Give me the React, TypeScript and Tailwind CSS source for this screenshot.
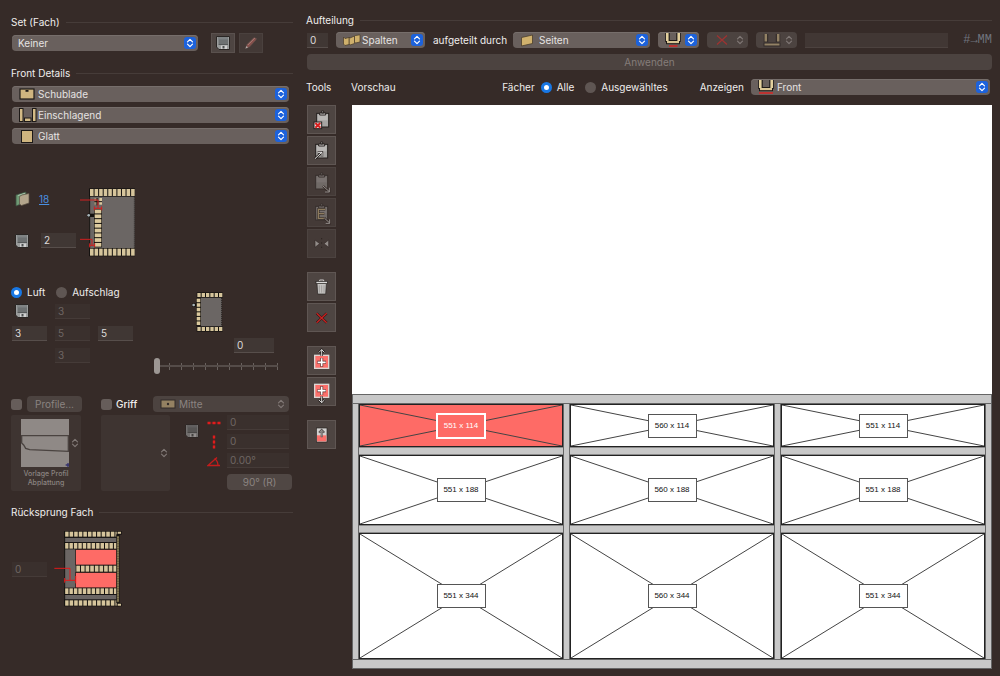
import React from 'react';
import clsx from 'clsx';

/* ---------- Icons ---------- */

const FloppyIcon: React.FC<{ className?: string }> = ({ className }) => (
  <svg viewBox="0 0 14 14" className={clsx('h-[14px] w-[14px] shrink-0', className)}>
    <path d="M0.5 0.5H13.5V13.5H3L0.5 11Z" fill="#9b9d9d" stroke="#2a2624" />
    <path d="M2.500 1H12V8H2.500Z" fill="#6d7172" />
    <path d="M2.500 1H12V3.500H2.500Z" fill="#7f8384" />
    <path d="M2.500 8.500H12" stroke="#555859" />
    <path d="M5 9.500H11V13H5Z" fill="#cfd0d0" />
    <path d="M6.500 10H8.500V12.500H6.500Z" fill="#4b4e4f" />
  </svg>
);

const PencilIcon: React.FC = () => (
  <svg viewBox="0 0 14 14" className="h-[14px] w-[14px]">
    <path d="M1.500 12.500L3 8.500L10 1.500L12.500 2.500L12 4L5.500 11Z" fill="#85504b" stroke="#5a4e4a" strokeWidth="0.6" />
    <path d="M3.800 9L10.800 2" stroke="#ab7d77" strokeWidth="1" />
    <path d="M1.500 12.500L2.500 10L4 11.500Z" fill="#b9b2ae" />
  </svg>
);

const DrawerIcon: React.FC = () => (
  <svg viewBox="0 0 16 12" className="h-3 w-4">
    <rect x="1" y="1" width="14" height="10" fill="#cfb57f" stroke="#1d1917" strokeWidth="1.2" />
    <rect x="6.500" y="2" width="3" height="1.800" fill="#1d1917" />
  </svg>
);

const InsetIcon: React.FC = () => (
  <svg viewBox="0 0 18 14" className="h-[14px] w-[18px]">
    <g fill="#d3bb87" stroke="#1d1917">
      <rect x="0.500" y="0.500" width="3.500" height="13" />
      <rect x="13.500" y="0.500" width="3.500" height="13" />
      <rect x="5.500" y="10" width="6.500" height="3.500" />
    </g>
  </svg>
);

const PlainIcon: React.FC = () => (
  <svg viewBox="0 0 12 13" className="h-[13px] w-3">
    <rect x="0.500" y="0.500" width="11" height="12" fill="#cfb57f" stroke="#1d1917" />
  </svg>
);

const ColumnsIcon: React.FC = () => (
  <svg viewBox="0 0 18 12" className="h-3 w-[18px]">
    <g fill="#cfb06c" stroke="#463a2a" strokeWidth="0.700">
      <path d="M11.500 2.500L12.500 1.500L17 0.800V8L12.500 9L11.500 8Z" />
      <path d="M6 3L7 4L11.500 2V9.500L7 11L6 10Z" />
      <path d="M0.500 3L2 4.500L6 3.500V10.500L2 11.500L0.500 10Z" />
    </g>
  </svg>
);

const BoardIcon: React.FC = () => (
  <svg viewBox="0 0 14 13" className="h-[13px] w-[14px]">
    <path d="M1.500 3.500L12.500 1V9.500L1.500 12Z" fill="#d0b16d" stroke="#4a3d2c" strokeWidth="0.800" />
  </svg>
);

// Cabinet seen from above, the red line marks the front
const FrontIcon: React.FC<{ narrow?: boolean }> = ({ narrow }) => (
  <svg viewBox="0 0 16 14" className="h-[14px] w-4">
    <path d="M2.500 0V9M13.500 0V9" stroke="#1d1917" strokeWidth="4.500" />
    <rect x="1.500" y="7.500" width="13" height="3.200" fill="#d9c594" stroke="#1d1917" />
    <path d="M2.300 0V8M13.700 0V8" stroke="#e3d09d" strokeWidth="2.600" />
    <path d={narrow ? 'M4 13H12.500' : 'M1 13H15'} stroke="#d22a28" strokeWidth="1.600" />
  </svg>
);

const SocketIcon: React.FC = () => (
  <svg viewBox="0 0 18 13" className="h-[13px] w-[18px]">
    <path d="M3 0V8M15 0V8" stroke="#1d1917" strokeWidth="4.500" />
    <path d="M2.800 0V7.500M15.200 0V7.500" stroke="#cdb684" strokeWidth="2.500" />
    <rect x="1" y="9" width="16" height="3" fill="#cdb684" stroke="#1d1917" />
  </svg>
);

const CrossIcon: React.FC = () => (
  <svg viewBox="0 0 12 12" className="h-3 w-3">
    <path d="M1 1.500L11 10.500M11 1.500L1 10.500" stroke="#e02626" strokeWidth="1.300" />
  </svg>
);

const HandleIcon: React.FC = () => (
  <svg viewBox="0 0 16 10" className="h-[10px] w-4">
    <rect x="1" y="1" width="14" height="8" fill="#cfb57f" stroke="#1d1917" />
    <circle cx="8" cy="5" r="1.200" fill="#1d1917" />
  </svg>
);

const ThicknessIcon: React.FC = () => (
  <svg viewBox="0 0 15 16" className="h-4 w-[15px]">
    <path d="M1 4L11 1V11L1 15Z" fill="#6f9a75" stroke="#3c5040" strokeWidth="0.800" />
    <path d="M3 4.500L10 2.200" stroke="#b9cdb9" strokeWidth="0.800" />
    <path d="M4.500 5.500L7 4L14 2.500V12L6.500 14.500L4.500 13Z" fill="#b3a58c" stroke="#5b5145" strokeWidth="0.700" />
  </svg>
);

const Arrows: React.FC<{ muted?: boolean }> = ({ muted }) => (
  <svg viewBox="0 0 12 12" className="h-3 w-3">
    {!muted && <rect width="12" height="12" rx="3" fill="#1c62dc" />}
    <path
      d="M3.500 4.800L6 2.300L8.500 4.800M3.500 7.200L6 9.700L8.500 7.200"
      fill="none"
      stroke={muted ? '#807875' : '#ffffff'}
      strokeWidth="1.200"
      strokeLinecap="round"
      strokeLinejoin="round"
    />
  </svg>
);

/* ---------- Controls ---------- */

interface PopupProps {
  label: string;
  value?: string;
  icon?: React.ReactNode;
  disabled?: boolean;
  className?: string;
  indent?: string;
}

const Popup: React.FC<PopupProps> = ({ label, value = '', icon, disabled, className, indent = 'pl-[26px]' }) => (
  <div
    className={clsx(
      'relative h-4 rounded',
      disabled ? 'bg-[#4c4340]' : 'bg-[#69605d] shadow-[inset_0_1px_0_#766e6b]',
      className,
    )}
  >
    <select
      aria-label={label}
      disabled={disabled}
      className={clsx(
        'block h-4 w-full appearance-none bg-transparent pr-4 leading-4 opacity-100 outline-none',
        disabled ? 'text-[#8b8481]' : 'text-[#e6e3e2]',
        indent,
      )}
    >
      <option>{value}</option>
    </select>
    {icon && (
      <span className={clsx('pointer-events-none absolute inset-y-0 left-[7px] flex items-center', disabled && 'opacity-55')}>
        {icon}
      </span>
    )}
    <span className="pointer-events-none absolute inset-y-0 right-[2px] flex items-center">
      <Arrows muted={disabled} />
    </span>
  </div>
);

const Field: React.FC<{ label: string; value: string; disabled?: boolean; className?: string }> = ({
  label,
  value,
  disabled,
  className,
}) => (
  <input
    aria-label={label}
    defaultValue={value}
    disabled={disabled}
    className={clsx(
      'block h-[15px] border-b px-[3px] leading-[14px] outline-none',
      disabled ? 'border-[#453b38] bg-[#3a302d] text-[#6f6663]' : 'border-[#574e4b] bg-[#403734] text-[#dedad9]',
      className,
    )}
  />
);

const Radio: React.FC<{ name: string; label: string; checked?: boolean }> = ({ name, label, checked }) => (
  <label className="flex items-center gap-[5px]">
    <input
      type="radio"
      name={name}
      defaultChecked={checked}
      className="h-[11px] w-[11px] appearance-none rounded-full bg-[#5f5653] checked:border-[3px] checked:border-[#1877e4] checked:bg-white"
    />
    {label}
  </label>
);

const Check: React.FC<{ label: string }> = ({ label }) => (
  <input type="checkbox" aria-label={label} className="h-[11px] w-[11px] appearance-none rounded-[3px] bg-[#665d5a]" />
);

const Heading: React.FC<{ children: React.ReactNode }> = ({ children }) => (
  <h2 className="flex h-4 items-center gap-[6px] whitespace-nowrap leading-4">
    {children}
    <span className="h-px flex-1 bg-[#463c39]" />
  </h2>
);

/* ---------- Technical drawings ---------- */

interface PlankProps {
  x: number;
  y: number;
  w: number;
  h: number;
  n: number;
  vertical?: boolean;
}

// Cut board: a dark strip with light wood segments
const Plank: React.FC<PlankProps> = ({ x, y, w, h, n, vertical }) => {
  const step = (vertical ? h : w) / n;
  return (
    <g>
      <rect x={x} y={y} width={w} height={h} fill="#14110f" />
      {Array.from({ length: n }, (_, i) =>
        vertical ? (
          <rect key={i} x={x + 2} y={y + i * step + 1} width={w - 4} height={step - 3} fill="#dcc99d" />
        ) : (
          <rect key={i} x={x + i * step + 2} y={y + 2} width={step - 3} height={h - 4} fill="#d6c59c" />
        ),
      )}
    </g>
  );
};

const SectionDrawing: React.FC = () => (
  <svg viewBox="240 54 168 210" className="h-[70px] w-14">
    <rect x="268" y="78" width="136" height="158" fill="#6b6664" />
    <path d="M269 56V258" stroke="#14110f" strokeWidth="3" />
    <path d="M403 80V234" stroke="#14110f" strokeWidth="2" strokeDasharray="3 3" />
    <Plank x={268} y={55} w={137} h={25} n={10} />
    <Plank x={268} y={234} w={137} h={25} n={10} />
    <Plank x={282} y={118} w={24} h={114} n={8} vertical />
    <rect x="283" y="84" width="8" height="20" fill="#9a8d72" />
    <rect x="298" y="84" width="8" height="20" fill="#dcc99d" />
    <path d="M283 95H306M291 84V106" stroke="#14110f" strokeWidth="3" />
    <path d="M262 136H282" stroke="#14110f" strokeWidth="10" />
    <circle cx="266" cy="136" r="4" fill="#a9b5ba" />
    <g fill="none" stroke="#cf2020" strokeWidth="3">
      <path d="M240 90H294V114M282 115H306M283 109V121M305 109V121" />
      <path d="M240 208H276V226M268 226H284M269 220V232M284 220V232" />
    </g>
  </svg>
);

const SideDrawing: React.FC = () => (
  <svg viewBox="573 363 99 123" className="h-[41px] w-[33px]">
    <rect x="602" y="382" width="63" height="88" fill="#6b6664" />
    <path d="M665 384V468" stroke="#14110f" strokeWidth="2" strokeDasharray="3 3" />
    <Plank x={590} y={367} w={78} h={16} n={6} />
    <Plank x={590} y={469} w={78} h={16} n={6} />
    <Plank x={588} y={385} w={15} h={82} n={6} vertical />
    <path d="M577 405H589" stroke="#14110f" strokeWidth="10" />
    <circle cx="581" cy="405" r="4" fill="#a9b5ba" />
  </svg>
);

const SetbackDrawing: React.FC = () => (
  <svg viewBox="162 450 207 234" className="h-[78px] w-[69px]">
    <rect x="193" y="453" width="164" height="225" fill="#6b6664" />
    <path d="M193 472H352M193 488H352M193 643H352M193 660H352" stroke="#14110f" strokeWidth="3" />
    <rect x="227" y="508" width="124" height="47" fill="#fe6b66" stroke="#14110f" strokeWidth="2" />
    <rect x="227" y="577" width="124" height="47" fill="#fe6b66" stroke="#14110f" strokeWidth="2" />
    <Plank x={193} y={453} w={165} h={19} n={12} />
    <Plank x={193} y={487} w={160} h={21} n={12} />
    <Plank x={227} y={555} w={125} h={22} n={9} />
    <Plank x={193} y={623} w={160} h={21} n={12} />
    <Plank x={193} y={659} w={165} h={20} n={12} />
    <path d="M194 453V678" stroke="#14110f" strokeWidth="3" />
    <rect x="350" y="464" width="8" height="204" fill="#857955" stroke="#14110f" strokeWidth="2" />
    <path d="M354 464V668" stroke="#5d5439" strokeWidth="6" strokeDasharray="2 3" />
    <path d="M350 453H365V464H358V468H350ZM350 667H358V670H365V679H350Z" fill="#14110f" />
    <path d="M353 458H363M353 674H363" stroke="#d6c59c" strokeWidth="6" />
    <path d="M163 565H210V601M193 601H228M194 594V608M227 588V610" fill="none" stroke="#e01a1a" strokeWidth="3" />
  </svg>
);

const ProfileDrawing: React.FC = () => (
  <svg viewBox="0 0 144 144" className="h-12 w-12">
    <rect width="144" height="144" fill="#8f8986" />
    <path d="M0 50H144M2 50V72L8 78L14 88L26 92L144 97M142 50V97" fill="none" stroke="#4a4340" strokeWidth="4" />
    <path d="M134 138H144M141 132V144" stroke="#34306e" strokeWidth="4" />
  </svg>
);

/* ---------- Tool column ---------- */

const Clipboard: React.FC<{ muted?: boolean }> = ({ muted }) => (
  <g opacity={muted ? 0.45 : 1}>
    <rect x="26" y="25" width="36" height="41" fill="#a6a4a2" stroke="#26211f" strokeWidth="3" />
    <path d="M29 28H59V46H29Z" fill="#b9b7b5" />
    <path d="M35 24H53V30H35ZM41 18H47V24H41Z" fill="#d9d8d7" stroke="#26211f" strokeWidth="3" />
  </g>
);

const toolGroups: { label: string; drawing: React.ReactNode; disabled?: boolean }[][] = [
  [
    {
      label: 'Zwischenablage leeren',
      drawing: (
        <>
          <g transform="translate(3 0)"><Clipboard /></g>
          <rect x="21" y="51" width="23" height="20" fill="#e4e2e1" stroke="#26211f" strokeWidth="3" />
          <path d="M25 54L40 68M40 54L25 68" stroke="#d81f1f" strokeWidth="6" />
        </>
      ),
    },
    {
      label: 'Kopieren',
      drawing: (
        <>
          <Clipboard />
          <path d="M24 68L44 49M32 49H45V62" fill="none" stroke="#26211f" strokeWidth="7" />
          <path d="M24 68L44 49M32 49H45V62" fill="none" stroke="#e9e8e7" strokeWidth="3" />
        </>
      ),
    },
    {
      label: 'Einsetzen',
      disabled: true,
      drawing: (
        <>
          <Clipboard muted />
          <path d="M48 57L67 74M67 62V75H54" fill="none" stroke="#352b28" strokeWidth="7" />
          <path d="M48 57L67 74M67 62V75H54" fill="none" stroke="#96908d" strokeWidth="3" />
        </>
      ),
    },
    {
      label: 'Aufteilung einsetzen',
      disabled: true,
      drawing: (
        <>
          <Clipboard muted />
          <path d="M55 34H34V61H55M34 47H52" fill="none" stroke="#2f2622" strokeWidth="7" />
          <path d="M55 34H34V61H55M34 47H52" fill="none" stroke="#8d7b5e" strokeWidth="4" />
          <path d="M52 60L68 75M68 64V76H56" fill="none" stroke="#352b28" strokeWidth="7" />
          <path d="M52 60L68 75M68 64V76H56" fill="none" stroke="#96908d" strokeWidth="3" />
        </>
      ),
    },
    {
      label: 'Spiegeln',
      disabled: true,
      drawing: (
        <>
          <path d="M24 33L38 44L24 55ZM65 33L51 44L65 55Z" fill="#928c89" stroke="#352b28" strokeWidth="2" />
          <path d="M44 27V62" stroke="#2c2421" strokeWidth="3" strokeDasharray="4 9" />
        </>
      ),
    },
  ],
  [
    {
      label: 'Löschen',
      drawing: (
        <>
          <path d="M38 28V24H50V28" fill="none" stroke="#cfcdcc" strokeWidth="3" />
          <path d="M30 34H58L56 66H32Z" fill="#c4c2c0" stroke="#26211f" strokeWidth="2" />
          <path d="M37 40V62M44 40V62M51 40V62" stroke="#8f8c8a" strokeWidth="2" />
          <rect x="27" y="28" width="34" height="7" fill="#dcdbda" stroke="#26211f" strokeWidth="2" />
        </>
      ),
    },
    {
      label: 'Alles löschen',
      drawing: (
        <>
          <path d="M29 31L59 59M59 31L29 59" stroke="#2c1514" strokeWidth="7" />
          <path d="M29 31L59 59M59 31L29 59" stroke="#c82322" strokeWidth="4" />
        </>
      ),
    },
  ],
  [
    {
      label: 'Oben einfügen',
      drawing: (
        <>
          <rect x="23" y="28" width="42" height="39" fill="#fb6f6a" stroke="#dcd5d2" strokeWidth="4" />
          <path d="M44 10V30M36 19L44 11L52 19" fill="none" stroke="#26211f" strokeWidth="7" />
          <path d="M44 10V30M36 19L44 11L52 19" fill="none" stroke="#d5d3d2" strokeWidth="3" />
          <path d="M44 36V62M31 49H57" stroke="#5b2b29" strokeWidth="9" />
          <path d="M44 37V61M32 49H56" stroke="#ffffff" strokeWidth="5" />
        </>
      ),
    },
    {
      label: 'Unten einfügen',
      drawing: (
        <>
          <rect x="23" y="22" width="42" height="39" fill="#fb6f6a" stroke="#dcd5d2" strokeWidth="4" />
          <path d="M44 58V78M36 69L44 77L52 69" fill="none" stroke="#26211f" strokeWidth="7" />
          <path d="M44 58V78M36 69L44 77L52 69" fill="none" stroke="#d5d3d2" strokeWidth="3" />
          <path d="M44 28V54M31 41H57" stroke="#5b2b29" strokeWidth="9" />
          <path d="M44 29V53M32 41H56" stroke="#ffffff" strokeWidth="5" />
        </>
      ),
    },
  ],
  [
    {
      label: 'Front übernehmen',
      drawing: (
        <>
          <rect x="28" y="24" width="32" height="42" fill="#d3d1d0" stroke="#26211f" strokeWidth="2" />
          <rect x="30" y="46" width="28" height="18" fill="#fb6f6a" />
          <path d="M44 29V52M36 38L44 30L52 38" fill="none" stroke="#5a5553" strokeWidth="6" />
          <path d="M44 31V50M38 37L44 31L50 37" fill="none" stroke="#aaa8a6" strokeWidth="2" />
        </>
      ),
    },
  ],
];

const Toolbar: React.FC = () => (
  <div className="flex w-[29px] flex-col gap-[14px]">
    {toolGroups.map((group, i) => (
      <div key={i} className="flex flex-col gap-[2px]">
        {group.map((tool) => (
          <button
            key={tool.label}
            aria-label={tool.label}
            disabled={tool.disabled}
            className={clsx(
              'h-[29px] w-[29px] ring-1 ring-inset',
              tool.disabled ? 'bg-[#443a37] ring-[#4c4340]' : 'bg-[#4e4542] ring-[#5f5653]',
            )}
          >
            <svg viewBox="0 0 87 87" className="h-[29px] w-[29px]">
              {tool.drawing}
            </svg>
          </button>
        ))}
      </div>
    ))}
  </div>
);

/* ---------- Cabinet preview ---------- */

const Compartment: React.FC<{ size: string; height: string; selected?: boolean }> = ({ size, height, selected }) => (
  <div className={clsx('relative flex items-center justify-center border border-[#222222]', height, selected ? 'bg-[#fe6b66]' : 'bg-white')}>
    <svg viewBox="0 0 100 100" preserveAspectRatio="none" className="absolute inset-0 h-full w-full">
      <path d="M0 0L100 100M100 0L0 100" stroke="#444444" strokeWidth="1" vectorEffect="non-scaling-stroke" />
    </svg>
    <span
      className={clsx(
        "relative flex items-center justify-center font-['Liberation_Sans',sans-serif] text-[8px] leading-none",
        selected
          ? 'h-[26px] w-[50px] border-2 border-white bg-[#fe6b66] text-white'
          : 'h-6 w-[49px] border border-[#555555] bg-white text-[#111111]',
      )}
    >
      {size}
    </span>
  </div>
);

const Shelf: React.FC = () => <div className="h-2 border-y border-[#8a8a8a] bg-[#c8c8c8]" />;

const Post: React.FC = () => <div className="border-x border-[#666666] bg-[#c8c8c8]" />;

const Cabinet: React.FC = () => (
  <div>
    <div className="h-[10px] border border-[#666666] bg-[#c8c8c8]" />
    <div className="grid grid-cols-[7px_1fr_7px_1fr_7px_1fr_7px]">
      {[551, 560, 551].map((width, i) => (
        <React.Fragment key={i}>
          <Post />
          <div>
            <Compartment size={`${width} x 114`} height="h-[43px]" selected={i === 0} />
            <Shelf />
            <Compartment size={`${width} x 188`} height="h-[70px]" />
            <Shelf />
            <Compartment size={`${width} x 344`} height="h-[126px]" />
          </div>
        </React.Fragment>
      ))}
      <Post />
    </div>
    <div className="h-[10px] border border-[#666666] bg-[#c8c8c8]" />
  </div>
);

/* ---------- Panels ---------- */

const Sidebar: React.FC = () => (
  <aside className="flex w-[282px] shrink-0 flex-col">
    <Heading>Set (Fach)</Heading>
    <div className="mt-[3px] flex items-center pl-px">
      <Popup label="Set" value="Keiner" indent="pl-[6px]" className="w-[186px]" />
      <button aria-label="Speichern" className="ml-[13px] flex h-5 w-6 items-center justify-center bg-[#4e4542] ring-1 ring-inset ring-[#5a514e]">
        <FloppyIcon />
      </button>
      <button aria-label="Bearbeiten" disabled className="ml-1 flex h-5 w-6 items-center justify-center bg-[#433936] ring-1 ring-inset ring-[#4a413e]">
        <PencilIcon />
      </button>
    </div>

    <div className="mt-3">
      <Heading>Front Details</Heading>
    </div>
    <div className="mt-[5px] flex flex-col gap-[5px] pl-px pr-1">
      <Popup label="Fronttyp" value="Schublade" icon={<DrawerIcon />} />
      <Popup label="Anschlag" value="Einschlagend" icon={<InsetIcon />} />
      <Popup label="Oberfläche" value="Glatt" icon={<span className="pl-[2px]"><PlainIcon /></span>} />
    </div>

    <div className="mt-11 flex pl-1">
      <div className="flex w-[65px] flex-col gap-[26px] pt-[3px]">
        <div className="flex h-4 items-center gap-[9px]">
          <ThicknessIcon />
          <a href="#dicke" className="text-[#4a8fe0] underline">18</a>
        </div>
        <div className="flex h-[15px] items-center gap-3">
          <FloppyIcon />
          <Field label="Rücksprung" value="2" className="w-[35px]" />
        </div>
      </div>
      <SectionDrawing />
    </div>

    <div className="mt-[26px] flex">
      <div className="w-[143px]">
        <div className="flex h-4 items-center gap-[11px]">
          <Radio name="luft" label="Luft" checked />
          <Radio name="luft" label="Aufschlag" />
        </div>
        <div className="mt-1 grid grid-cols-[35px_35px_35px] gap-x-2 gap-y-[7px] pl-px">
          <FloppyIcon className="ml-[3px]" />
          <Field label="Luft oben" value="3" disabled />
          <span />
          <Field label="Luft links" value="3" />
          <Field label="Luft Mitte" value="5" disabled />
          <Field label="Luft rechts" value="5" />
          <span />
          <Field label="Luft unten" value="3" disabled />
        </div>
      </div>
      <div className="w-[127px] pt-[7px]">
        <div className="flex h-10 justify-start pl-[37px]">
          <SideDrawing />
        </div>
        <div className="mt-[7px] flex justify-end pr-[7px]">
          <Field label="Öffnung" value="0" className="w-10" />
        </div>
        <div className="relative mt-[5px] h-4">
          <div className="absolute inset-x-[3px] inset-y-0 flex items-center justify-between">
            <span className="absolute inset-x-0 top-[7px] h-[2px] bg-[#554c49]" />
            {Array.from({ length: 11 }, (_, i) => (
              <span key={i} className="h-[7px] w-px bg-[#6a625f]" />
            ))}
          </div>
          <input
            type="range"
            aria-label="Öffnungswinkel"
            defaultValue={0}
            className="absolute inset-0 m-0 h-4 w-full appearance-none bg-transparent [&::-webkit-slider-thumb]:h-4 [&::-webkit-slider-thumb]:w-[6px] [&::-webkit-slider-thumb]:appearance-none [&::-webkit-slider-thumb]:rounded-full [&::-webkit-slider-thumb]:bg-[#9d9794]"
          />
        </div>
      </div>
    </div>

    <div className="mt-[22px] flex h-4 items-center pr-1">
      <Check label="Profil" />
      <button disabled className="ml-[5px] h-4 w-[55px] rounded bg-[#4c4340] text-[#8b8481]">Profile...</button>
      <label className="ml-[19px] flex w-[52px] items-center gap-1 font-medium">
        <Check label="Griff" />
        Griff
      </label>
      <Popup label="Griffposition" value="Mitte" icon={<HandleIcon />} disabled className="flex-1" />
    </div>
    <div className="mt-[3px] flex">
      <div className="flex h-[76px] w-[70px] flex-col items-center rounded-[2px] bg-[#3e3431] pt-1">
        <div className="flex w-full items-center justify-end">
          <ProfileDrawing />
          <Arrows muted />
        </div>
        <p className="mt-[2px] text-center text-[7px] font-medium leading-[9px] text-[#8b8481]">
          Vorlage Profil
          <br />
          Abplattung
        </p>
      </div>
      <div className="ml-5 flex h-[76px] w-[69px] items-center justify-end rounded-[2px] bg-[#3e3431]">
        <Arrows muted />
      </div>
      <FloppyIcon className="ml-[15px] mt-[9px] opacity-60" />
      <div className="ml-2 flex w-[86px] flex-col gap-1">
        <div className="flex items-center gap-[6px]">
          <svg viewBox="0 0 14 14" className="h-[14px] w-[14px]">
            <path d="M1 7H13" stroke="#7d1b1b" />
            <path d="M0.500 7H3.500M5.500 7H8.500M10.500 7H13.500" stroke="#e01c1c" strokeWidth="2.400" />
          </svg>
          <Field label="Griff horizontal" value="0" disabled className="w-[62px]" />
        </div>
        <div className="flex items-center gap-[6px]">
          <svg viewBox="0 0 14 14" className="h-[14px] w-[14px]">
            <path d="M7 1V13" stroke="#7d1b1b" />
            <path d="M7 0.500V3.500M7 5.500V8.500M7 10.500V13.500" stroke="#e01c1c" strokeWidth="2.400" />
          </svg>
          <Field label="Griff vertikal" value="0" disabled className="w-[62px]" />
        </div>
        <div className="flex items-center gap-[6px]">
          <svg viewBox="0 0 14 14" className="h-[14px] w-[14px]">
            <path d="M13 11.500H1L10 3.500M7.500 4.500Q11 7 11 11.500" fill="none" stroke="#c41c1c" strokeWidth="1.300" />
          </svg>
          <Field label="Griff Winkel" value="0.00°" disabled className="w-[62px]" />
        </div>
        <button disabled className="ml-5 mt-[2px] h-4 w-[65px] rounded bg-[#504744] text-[#8b8481]">90° (R)</button>
      </div>
    </div>

    <div className="mt-[13px]">
      <Heading>Rücksprung Fach</Heading>
    </div>
    <div className="mt-[10px] flex items-center gap-[7px] pl-px">
      <Field label="Rücksprung Fach" value="0" disabled className="w-[35px]" />
      <SetbackDrawing />
    </div>
  </aside>
);

const Workspace: React.FC = () => (
  <main className="flex min-w-0 flex-1 flex-col">
    <div className="-mt-[2px]">
      <Heading>Aufteilung</Heading>
    </div>
    <div className="mt-1 flex h-4 items-center gap-2 whitespace-nowrap pl-px">
      <Field label="Anzahl" value="0" className="w-[21px]" />
      <Popup label="Aufteilung" value="Spalten" icon={<ColumnsIcon />} className="w-[89px]" />
      <span className="w-[72px]">aufgeteilt durch</span>
      <Popup label="Aufgeteilt durch" value="Seiten" icon={<BoardIcon />} className="w-[137px]" />
      <Popup label="Lage" icon={<FrontIcon narrow />} className="w-[41px]" />
      <Popup label="Verbindung" icon={<span className="pl-[2px]"><CrossIcon /></span>} disabled className="w-[41px]" />
      <Popup label="Sockel" icon={<SocketIcon />} disabled className="w-[41px]" />
      <input
        aria-label="Formel"
        disabled
        className="block h-[15px] min-w-0 flex-1 border-b border-[#4c423f] bg-[#413734] px-[3px]"
      />
      <span className="w-9 text-right font-['Liberation_Mono',monospace] text-[12px] leading-none text-[#70747e]">#→MM</span>
    </div>
    <button disabled className="ml-px mt-[6px] h-4 rounded bg-[#4c4340] text-[#857d7a]">Anwenden</button>

    <div className="mt-[9px] flex h-4 items-center whitespace-nowrap pr-[2px]">
      <h3 className="w-[45px]">Tools</h3>
      <h3 className="flex-1">Vorschau</h3>
      <span className="mr-[6px]">Fächer</span>
      <div className="flex gap-[11px]">
        <Radio name="faecher" label="Alle" checked />
        <Radio name="faecher" label="Ausgewähltes" />
      </div>
      <span className="ml-8 mr-[7px]">Anzeigen</span>
      <Popup label="Anzeigen" value="Front" icon={<FrontIcon />} className="w-[239px]" />
    </div>

    <div className="mt-[10px] flex flex-1 gap-4 pl-px">
      <Toolbar />
      <div className="flex min-w-0 flex-1 flex-col justify-end bg-white">
        <Cabinet />
      </div>
    </div>
  </main>
);

export default function App() {
  return (
    <div className="flex min-h-screen gap-[13px] bg-[#362b28] pb-[7px] pl-[11px] pr-2 pt-[14px] font-['Inter',sans-serif] text-[10px] text-[#f0eeed]">
      <Sidebar />
      <Workspace />
    </div>
  );
}
